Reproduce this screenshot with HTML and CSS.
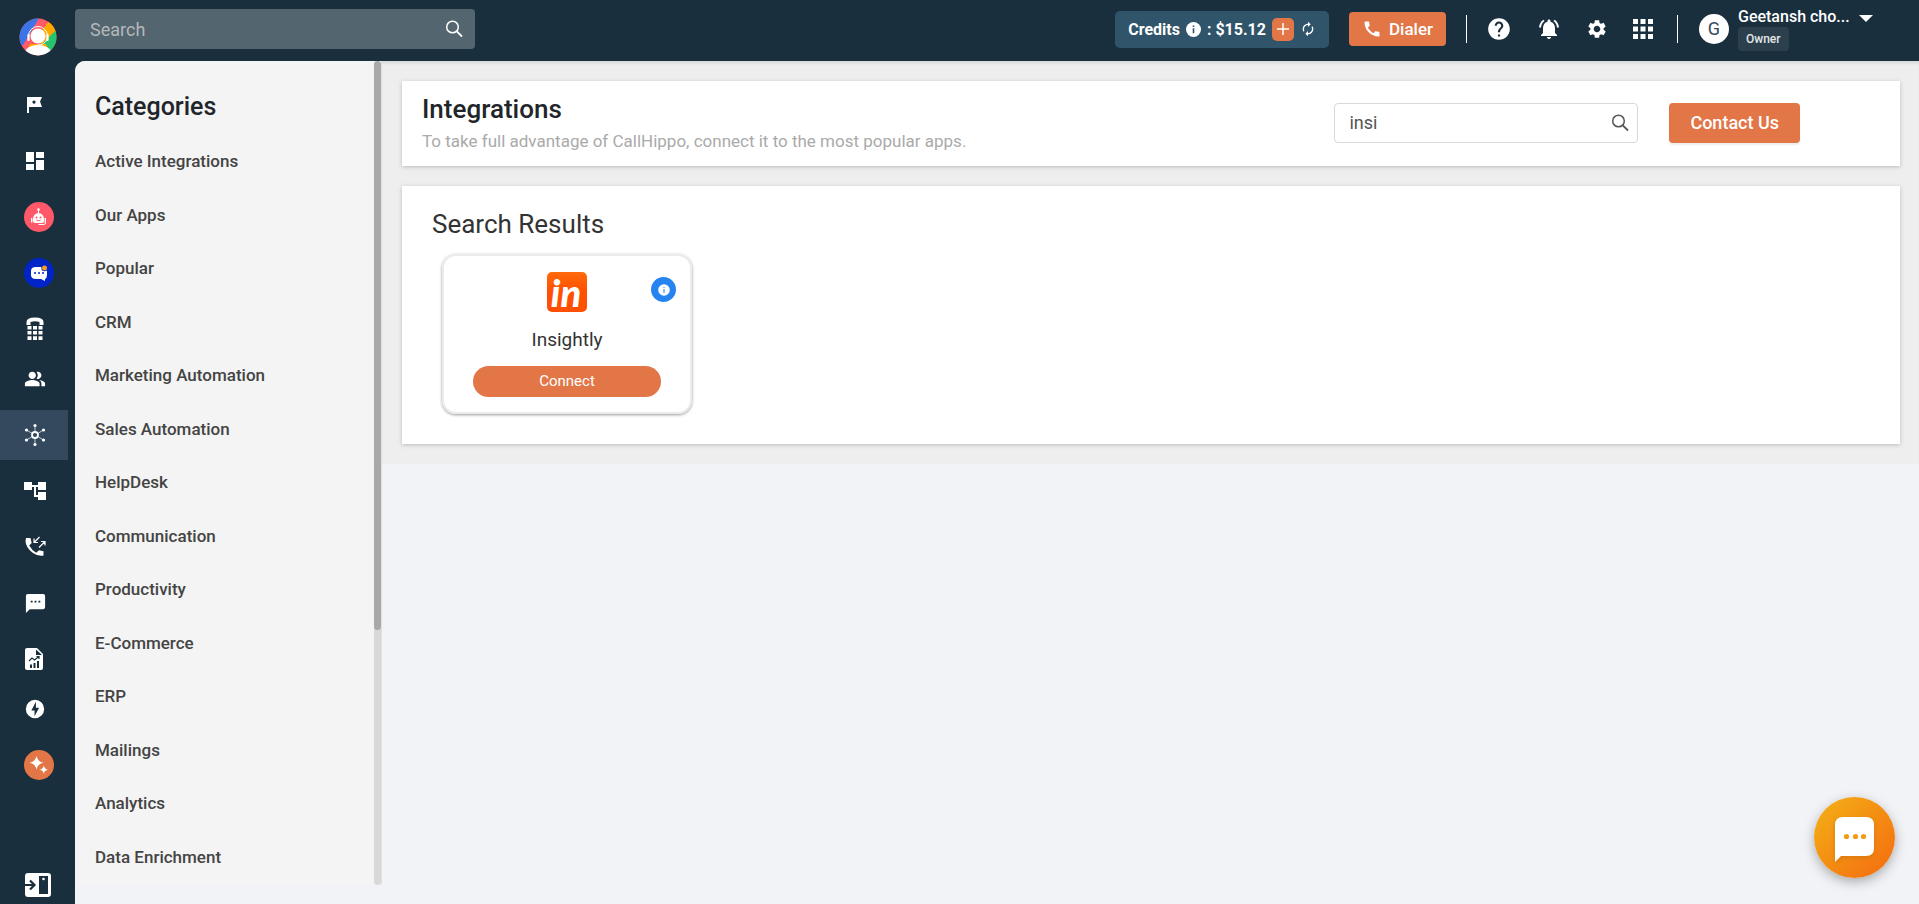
FILE: index.html
```html
<!DOCTYPE html>
<html lang="en">
<head>
    <meta charset="UTF-8">
    <meta name="viewport" content="width=device-width, initial-scale=1.0">
    <title>Integrations</title>
    <link rel="stylesheet" href="styles.css">
</head>
<body>
    <div class="app">
        <aside class="sidebar">
            <a class="logo" href="#" aria-label="Home">
                <svg width="38" height="38" viewBox="0 0 38 38">
                    <defs><clipPath id="logoClip"><circle cx="19" cy="19" r="18.5"/></clipPath></defs>
                    <g clip-path="url(#logoClip)">
                        <rect width="38" height="38" fill="#ff5a69"/>
                        <path d="M0 0h20L4 27H0z" fill="#3b74e8"/>
                        <path d="M30 3l8 8v5L25 28l-8-8z" fill="#ffa800"/>
                        <path d="M38 11v27H26l-3-12z" fill="#28c46d"/>
                        <path d="M11 26h16l2 4H9z" fill="#ffa800"/>
                        <ellipse cx="19" cy="35" rx="13" ry="8" fill="#fff"/>
                        <circle cx="19" cy="18" r="7.500" fill="#fff"/>
                        <path d="M9.500 18a9.500 9.500 0 0 1 19 0" fill="none" stroke="#fff"/>
                        <path d="M9.500 17v5M28.500 17v5" stroke="#fff" stroke-width="2.200" stroke-linecap="round"/>
                        <path d="M28 21a9 8 0 0 1-9 6" fill="none" stroke="#fff"/>
                    </g>
                </svg>
            </a>
            <nav class="menu">
                <ul class="menu-group">
                    <li><a href="#" aria-label="Get started"><svg width="24" height="24" viewBox="0 0 24 24"><path fill="#fff" fill-rule="evenodd" d="M4 4h15l-2 4.500 2 5.500H6v6H4zM11 7.500a1.600 1.600 0 1 0 .01 0z"/></svg></a></li>
                    <li><a href="#" aria-label="Dashboard"><svg width="24" height="24" viewBox="0 0 24 24"><path fill="#fff" d="M3 13h8V3H3v10zm0 8h8v-6H3v6zm10 0h8V11h-8v10zm0-18v6h8V3h-8z"/></svg></a></li>
                    <li><a class="round" href="#" aria-label="AI bot">
                        <svg width="30" height="30" viewBox="0 0 30 30">
                            <circle cx="15" cy="15" r="15" fill="#ff5869"/>
                            <path d="M14 7h1v5h-1z" fill="#fff"/><circle cx="14.500" cy="7.500" r="1.300" fill="#fff"/>
                            <path d="M9 17a5.500 6 0 0 1 11 0v2q0 2-2 2h-7q-2 0-2-2z" fill="#fff"/>
                            <path d="M7 16h1.400v4.500H7zM20.600 16H22v4.500h-1.400z" fill="#fff"/>
                            <path d="M21.500 20v1q0 1.500-2 1.500h-5" stroke="#fff" fill="none"/>
                            <circle cx="12.500" cy="15.500" r="1" fill="#ff5869"/><circle cx="16.500" cy="15.500" r="1" fill="#ff5869"/>
                            <path d="M12.500 18q2 1.600 4 0" stroke="#ff5869" fill="none"/>
                        </svg></a></li>
                    <li><a class="round" href="#" aria-label="Live chat">
                        <svg width="30" height="30" viewBox="0 0 30 30">
                            <circle cx="15" cy="15" r="15" fill="#0024c8"/>
                            <path d="M12 9h6q5 0 5 5v3q0 3-2 4v2l-4-2h-5q-5 0-5-4v-4q0-4 5-4z" fill="#fff"/>
                            <circle cx="11" cy="15" r="1" fill="#0024c8"/><circle cx="15" cy="15" r="1" fill="#0024c8"/><circle cx="19" cy="15" r="1" fill="#0024c8"/>
                            <circle cx="20.500" cy="10" r="3.200" fill="#0024c8"/><circle cx="20.500" cy="10" r="2.500" fill="#f99d1c"/>
                        </svg></a></li>
                    <li><a href="#" aria-label="Numbers"><svg width="24" height="24" viewBox="0 0 24 24"><path fill="#fff" d="M3.500 8V5q0-4.500 8.500-4.500T20.500 5v3h-4V5q-4.500-1.600-9 0v3zM4.500 9h4v3.400h-4zM10 9h4v3.400h-4zM15.500 9h4v3.400h-4zM4.500 14h4v3.600h-4zM10 14h4v3.600h-4zM15.500 14h4v3.600h-4zM4.500 19.200h4V23h-4zM10 19.200h4V23h-4zM15.500 19.200h4V23h-4z"/></svg></a></li>
                </ul>
                <ul class="menu-group">
                    <li><a href="#" aria-label="Users"><svg width="22" height="22" viewBox="0 0 24 24"><path fill="#fff" d="M16.670 13.130C18.040 14.060 19 15.320 19 17v3h4v-3c0-2.180-3.570-3.470-6.330-3.870zM15 12c2.210 0 4-1.790 4-4s-1.790-4-4-4c-.47 0-.91.1-1.330.24C14.500 5.270 15 6.580 15 8s-.5 2.730-1.330 3.760c.42.14.86.24 1.330.24zM9 12c2.210 0 4-1.790 4-4s-1.790-4-4-4-4 1.790-4 4 1.790 4 4 4zm0 1c-2.670 0-8 1.340-8 4v3h16v-3c0-2.660-5.330-4-8-4z"/></svg></a></li>
                    <li><a class="active" href="#" aria-label="Integrations">
                        <svg width="24" height="24" viewBox="0 0 24 24" stroke="#fff" fill="none">
                            <path d="M12 9V3M12 15v6M9.400 10.500L3.500 7M14.600 10.500L20.500 7M9.400 13.500L3.500 17M14.600 13.500l5.900 3.500" stroke-width=".7"/>
                            <circle cx="12" cy="12" r="3" stroke-width="1.800"/>
                            <g fill="#fff" stroke="none"><circle cx="12" cy="2.500" r="1.600"/><circle cx="12" cy="21.500" r="1.600"/><circle cx="3.500" cy="7" r="1.600"/><circle cx="20.500" cy="7" r="1.600"/><circle cx="3.500" cy="17" r="1.600"/><circle cx="20.500" cy="17" r="1.600"/></g>
                        </svg></a></li>
                    <li><a href="#" aria-label="Call flow"><svg width="24" height="24" viewBox="0 0 24 24"><path fill="#fff" d="M23 11V3h-8v3H9V3H1v8h8V8h2v10h4v3h8v-8h-8v3h-2V8h2v3z"/></svg></a></li>
                    <li><a href="#" aria-label="Call logs"><svg width="22" height="22" viewBox="0 0 22 22">
                        <path fill="#fff" d="M2 2h4.500l1.200 5-2.500 2.500q2.500 4.700 7 7.200l2.800-2.500 4.500 1v4.300q-5.500 1-10.500-2.500T2 8q-1-3 0-6z"/>
                        <path d="M15.500 1l-5.500 5.500M10 2.500v4h4M15 11.500l6-6M17 5.500h4v4" stroke="#fff" stroke-width="1.200" fill="none"/></svg></a></li>
                    <li><a href="#" aria-label="Messages"><svg width="23" height="23" viewBox="0 0 24 24"><path fill="#fff" d="M20 2H4c-1.100 0-1.990.9-1.990 2L2 22l4-4h14c1.100 0 2-.9 2-2V4c0-1.100-.9-2-2-2zM9 11H7V9h2v2zm4 0h-2V9h2v2zm4 0h-2V9h2v2z"/></svg></a></li>
                    <li><a href="#" aria-label="Reports"><svg width="24" height="24" viewBox="0 0 24 24">
                        <path fill="#fff" d="M4 1h10l6 6v14q0 2-2 2H4q-2 0-2-2V3q0-2 2-2z"/>
                        <path fill="#1a2f3d" d="M13 2.500V8h6zM7 17.500h2V21H7zM10.500 16h2v5h-2zM14 14h2v7h-2z"/>
                        <path d="M6 14l3-3 2.500 2L16 9.500M13.500 9.500H16V12" stroke="#1a2f3d" stroke-width="1.200" fill="none"/></svg></a></li>
                </ul>
                <ul class="menu-group">
                    <li><a href="#" aria-label="Power dialer"><svg width="22" height="22" viewBox="0 0 24 24"><path fill="#fff" fill-rule="evenodd" d="M12 2a10 10 0 1 0 0 20 10 10 0 0 0 0-20zm-.5 18v-6.500H8L13 4v6.500h3.500z"/></svg></a></li>
                    <li><a class="round" href="#" aria-label="AI studio">
                        <svg width="30" height="30" viewBox="0 0 30 30">
                            <circle cx="15" cy="15" r="15" fill="#e27647"/>
                            <path fill="#fff" d="M12.500 6q1 5.500 7 6.800-6 1.200-7 6.700-1-5.500-7-6.700 6-1.300 7-6.800zM19.800 15.500q.6 3.500 4.200 4.200-3.600.7-4.200 4.100-.6-3.400-4.200-4.100 3.600-.7 4.200-4.200z"/>
                        </svg></a></li>
                </ul>
            </nav>
            <button class="collapse" type="button" aria-label="Expand menu">
                <svg width="26" height="24" viewBox="0 0 26 24">
                    <rect width="26" height="24" rx="3" fill="#fff"/>
                    <path d="M0 12h9M5 7.500L9.500 12 5 16.500" stroke="#1a2f3d" stroke-width="2.200" fill="none"/>
                    <rect x="14" y="3" width="9" height="18" fill="#1a2f3d"/><circle cx="18.500" cy="6" r="1.300" fill="#fff"/>
                </svg>
            </button>
        </aside>

        <div class="page">
            <header class="topbar">
                <div class="global-search">
                    <input type="text" placeholder="Search" aria-label="Search">
                    <button type="button" aria-label="Search"><svg width="20" height="20" viewBox="0 0 20 20"><circle cx="8.500" cy="8" r="5.800" fill="none" stroke="#fff" stroke-width="1.500"/><path d="M12.500 12.200l5.500 5.300" stroke="#fff" stroke-width="1.800"/></svg></button>
                </div>
                <div class="credits">
                    <span>Credits</span>
                    <svg width="15" height="15" viewBox="0 0 15 15"><circle cx="7.500" cy="7.500" r="7.500" fill="#fff"/><path d="M6.700 3.500h1.600v1.600H6.700zM6.700 6.300h1.600v5H6.700z" fill="#305469"/></svg>
                    <span>: $15.12</span>
                    <button class="add" type="button" aria-label="Add credits"><svg width="12" height="12" viewBox="0 0 12 12"><path d="M6 0v12M0 6h12" stroke="#fff" stroke-width="1.500"/></svg></button>
                    <button class="refresh" type="button" aria-label="Refresh"><svg width="16" height="16" viewBox="0 0 24 24"><path fill="#fff" d="M12 6v3l4-4-4-4v3c-4.420 0-8 3.580-8 8 0 1.570.46 3.030 1.240 4.260L6.700 14.800c-.45-.83-.7-1.790-.7-2.800 0-3.310 2.690-6 6-6zm6.760 1.740L17.300 9.200c.44.840.7 1.790.7 2.800 0 3.310-2.690 6-6 6v-3l-4 4 4 4v-3c4.420 0 8-3.580 8-8 0-1.570-.46-3.030-1.240-4.260z"/></svg></button>
                </div>
                <button class="dialer" type="button">
                    <svg width="20" height="20" viewBox="0 0 24 24"><path fill="#fff" d="M20.010 15.380c-1.230 0-2.420-.2-3.530-.56-.35-.12-.74-.03-1.010.24l-1.570 1.970c-2.830-1.350-5.480-3.900-6.890-6.830l1.950-1.660c.27-.28.35-.67.24-1.020-.37-1.110-.56-2.300-.56-3.530 0-.54-.45-.99-.99-.99H4.190C3.650 3 3 3.240 3 3.990 3 13.280 10.730 21 20.010 21c.71 0 .99-.63.99-1.180v-3.450c0-.54-.45-.99-.99-.99z"/></svg>
                    Dialer
                </button>
                <span class="divider"></span>
                <div class="tools">
                    <button type="button" aria-label="Help"><svg width="26" height="26" viewBox="0 0 24 24"><path fill="#fff" d="M12 2C6.480 2 2 6.480 2 12s4.480 10 10 10 10-4.480 10-10S17.520 2 12 2zm1 17h-2v-2h2v2zm2.070-7.750l-.9.920C13.450 12.900 13 13.500 13 15h-2v-.5c0-1.100.45-2.100 1.170-2.830l1.240-1.260c.37-.36.59-.86.59-1.410 0-1.100-.9-2-2-2s-2 .9-2 2H8c0-2.210 1.790-4 4-4s4 1.790 4 4c0 .88-.36 1.680-.93 2.250z"/></svg></button>
                    <button type="button" aria-label="Notifications"><svg width="24" height="24" viewBox="0 0 24 24"><path fill="#fff" d="M7.580 4.080L6.150 2.650C3.750 4.480 2.170 7.300 2.030 10.500h2c.15-2.650 1.510-4.970 3.550-6.420zm12.390 6.420h2c-.15-3.200-1.730-6.020-4.120-7.850l-1.420 1.430c2.020 1.450 3.390 3.770 3.540 6.420zM18 11c0-3.070-1.640-5.640-4.500-6.320V4c0-.83-.67-1.500-1.500-1.500s-1.500.67-1.500 1.500v.68C7.630 5.360 6 7.920 6 11v5l-2 2v1h16v-1l-2-2v-5zm-6 11c.14 0 .27-.01.4-.04.65-.14 1.180-.58 1.440-1.180.1-.24.150-.5.150-.78h-4c.01 1.100.9 2 2.010 2z"/></svg></button>
                    <button type="button" aria-label="Settings"><svg width="22" height="22" viewBox="0 0 24 24"><path fill="#fff" d="M19.140 12.940c.04-.3.06-.61.06-.94 0-.32-.02-.64-.07-.94l2.030-1.580c.18-.14.23-.41.12-.61l-1.920-3.320c-.12-.22-.37-.29-.59-.22l-2.390.96c-.5-.38-1.030-.7-1.620-.94L14.400 2.810c-.04-.24-.24-.41-.48-.41h-3.840c-.24 0-.43.17-.47.41L9.250 5.350C8.660 5.590 8.120 5.920 7.630 6.290L5.240 5.330c-.22-.08-.47 0-.59.22L2.740 8.870c-.12.21-.08.47.12.610l2.030 1.580C4.840 11.360 4.800 11.690 4.800 12s.02.64.07.940l-2.030 1.580c-.18.14-.23.41-.12.610l1.920 3.320c.12.22.37.29.59.22l2.390-.96c.5.38 1.030.7 1.620.94l.36 2.540c.05.24.24.41.48.41h3.840c.24 0 .44-.17.47-.41l.36-2.540c.59-.24 1.130-.56 1.620-.94l2.390.96c.22.08.47 0 .59-.22l1.920-3.320c.12-.22.07-.47-.12-.61l-2.010-1.580zM12 15.600c-1.980 0-3.600-1.620-3.600-3.600s1.620-3.600 3.600-3.600 3.600 1.620 3.600 3.600-1.620 3.600-3.600 3.600z"/></svg></button>
                    <button type="button" aria-label="Apps"><svg width="20" height="20" viewBox="0 0 20 20"><path fill="#fff" d="M0 0h5v5H0zM7.500 0h5v5h-5zM15 0h5v5h-5zM0 7.500h5v5H0zM7.500 7.500h5v5h-5zM15 7.500h5v5h-5zM0 15h5v5H0zM7.500 15h5v5h-5zM15 15h5v5h-5z"/></svg></button>
                </div>
                <span class="divider"></span>
                <button class="profile" type="button">
                    <span class="avatar">G</span>
                    <span class="profile-info">
                        <span class="profile-name">Geetansh cho...</span>
                        <span class="role">Owner</span>
                    </span>
                    <svg class="caret" width="14" height="7" viewBox="0 0 14 7"><path fill="#fff" d="M0 0h14L7 7z"/></svg>
                </button>
            </header>

            <div class="content">
                <aside class="categories">
                    <div class="category-list">
                        <h2>Categories</h2>
                        <ul>
                            <li><a href="#">Active Integrations</a></li>
                            <li><a href="#">Our Apps</a></li>
                            <li><a href="#">Popular</a></li>
                            <li><a href="#">CRM</a></li>
                            <li><a href="#">Marketing Automation</a></li>
                            <li><a href="#">Sales Automation</a></li>
                            <li><a href="#">HelpDesk</a></li>
                            <li><a href="#">Communication</a></li>
                            <li><a href="#">Productivity</a></li>
                            <li><a href="#">E-Commerce</a></li>
                            <li><a href="#">ERP</a></li>
                            <li><a href="#">Mailings</a></li>
                            <li><a href="#">Analytics</a></li>
                            <li><a href="#">Data Enrichment</a></li>
                        </ul>
                    </div>
                    <div class="scroll-track"><div class="scroll-thumb"></div></div>
                </aside>

                <main class="main">
                    <section class="panel intro">
                        <div class="intro-text">
                            <h1>Integrations</h1>
                            <p>To take full advantage of CallHippo, connect it to the most popular apps.</p>
                        </div>
                        <div class="app-search">
                            <input type="text" value="insi" aria-label="Search integrations">
                            <button type="button" aria-label="Search"><svg width="20" height="20" viewBox="0 0 20 20"><circle cx="8.500" cy="8" r="5.800" fill="none" stroke="#555" stroke-width="1.500"/><path d="M12.500 12.200l5.500 5.300" stroke="#555" stroke-width="1.800"/></svg></button>
                        </div>
                        <button class="contact" type="button">Contact Us</button>
                    </section>

                    <section class="panel results">
                        <h2>Search Results</h2>
                        <div class="cards">
                            <article class="card">
                                <svg class="insightly" width="40" height="40" viewBox="0 0 40 40">
                                    <defs><linearGradient id="insightly" x1="0" y1="0" x2="0" y2="1"><stop offset="0" stop-color="#ff6a0c"/><stop offset=".5" stop-color="#ff4f00"/></linearGradient></defs>
                                    <rect width="40" height="40" rx="5" fill="url(#insightly)"/>
                                    <text class="insightly-mark" x="19" y="35" text-anchor="middle">in</text>
                                </svg>
                                <button class="info" type="button" aria-label="About Insightly"><svg width="12" height="12" viewBox="0 0 12 12"><circle cx="6" cy="6" r="5.800" fill="#fff"/><path d="M5.500 3h1v1h-1zM5.500 5h1v4h-1z" fill="#2684f0"/></svg></button>
                                <h3>Insightly</h3>
                                <button class="connect" type="button">Connect</button>
                            </article>
                        </div>
                    </section>
                </main>
            </div>
        </div>
    </div>

    <button class="chat" type="button" aria-label="Open chat">
        <svg width="40" height="46" viewBox="0 0 40 46">
            <path d="M8 0h23q8 0 8 8v23q0 8-8 8H6l-6 6V8q0-8 8-8z" fill="#fff"/>
            <g fill="#f59a13"><circle cx="11.500" cy="19.500" r="2.600"/><circle cx="20.500" cy="19.500" r="2.600"/><circle cx="28.500" cy="19.500" r="2.600"/></g>
        </svg>
    </button>
</body>
</html>
```
FILE: styles.css
```css
* {
    box-sizing: border-box;
}
body {
    margin: 0;
    background-color: #f1f3f7;
    color: #212529;
    font-family: Roboto, "Liberation Sans", sans-serif;
    font-size: 16px;
}
h1, h2, h3, p, ul {
    margin: 0;
    padding: 0;
}
ul {
    list-style: none;
}
a {
    color: inherit;
    text-decoration: none;
}
button {
    padding: 0;
    border: 0;
    background: none;
    color: inherit;
    font: inherit;
    cursor: pointer;
}
input {
    border: 0;
    outline: 0;
    background: none;
    font: inherit;
}
svg {
    display: block;
    flex: none;
}
.app {
    display: flex;
    height: 100vh;
    background-color: #1a2f3d;
}

/* left menu */
.sidebar {
    display: flex;
    flex-direction: column;
    flex: none;
    width: 75px;
    padding: 18px 0 7px;
}
.logo {
    align-self: center;
    margin-bottom: 24px;
}
.menu {
    flex: 1;
}
.menu-group {
    display: grid;
    gap: 6px;
}
.menu-group a {
    display: flex;
    align-items: center;
    justify-content: center;
    width: 68px;
    height: 50px;
    padding-left: 2px;
}
.menu-group .round {
    width: 76px;
}
.menu-group .active {
    background-color: #34495e;
}
.collapse {
    align-self: center;
}

/* header */
.page {
    display: flex;
    flex-direction: column;
    flex: 1;
    min-width: 0;
}
.topbar {
    display: flex;
    align-items: center;
    flex: none;
    height: 61px;
    padding: 0 46px 3px 0;
    color: #fff;
}
.global-search {
    display: flex;
    align-items: center;
    width: 400px;
    height: 40px;
    margin-right: auto;
    padding: 0 11px 0 15px;
    border-radius: 4px;
    background-color: #53656f;
}
.global-search input {
    flex: 1;
    min-width: 0;
    padding: 0;
    color: #fff;
    font-size: 18px;
}
.global-search input::placeholder {
    color: #b4b8bb;
}
.credits {
    display: flex;
    align-items: center;
    gap: 6px;
    height: 37px;
    margin-right: 20px;
    padding: 0 13px;
    border-radius: 5px;
    background-color: #305469;
    font-weight: 700;
}
.add {
    display: flex;
    align-items: center;
    justify-content: center;
    width: 22px;
    height: 23px;
    border-radius: 5px;
    background-color: #e27647;
}
.dialer {
    display: flex;
    align-items: center;
    gap: 7px;
    height: 34px;
    padding: 0 13px;
    border-radius: 4px;
    background-color: #e27647;
    font-size: 17px;
    font-weight: 500;
}
.divider {
    width: 1px;
    height: 28px;
    margin-left: 20px;
    background-color: #fff;
}
.tools {
    display: flex;
    align-items: center;
    gap: 25px;
    margin-left: 19px;
    margin-right: 4px;
}
.profile {
    display: flex;
    align-items: center;
    margin-left: 21px;
}
.avatar {
    width: 30px;
    height: 30px;
    border-radius: 50%;
    background-color: #fff;
    color: #34495e;
    font-size: 18px;
    line-height: 30px;
}
.profile-info {
    display: flex;
    flex-direction: column;
    align-items: flex-start;
    width: 109px;
    margin: 0 12px 0 9px;
}
.profile-name {
    font-weight: 500;
    line-height: 20px;
    white-space: nowrap;
}
.role {
    padding: 0 8px;
    border-radius: 4px;
    background-color: #2b404c;
    color: #e4e7e9;
    font-size: 12px;
    font-weight: 500;
    line-height: 24px;
}
.caret {
    align-self: flex-start;
    margin-top: 8px;
}

/* categories */
.content {
    display: flex;
    align-items: flex-start;
    flex: 1;
    min-height: 0;
    border-radius: 10px 0 0 0;
    background-color: #f1f3f7;
    overflow: hidden;
}
.categories {
    display: flex;
    flex: none;
    width: 307px;
    height: calc(100vh - 80px);
    border-right: 1px solid #e0e0e0;
    background-color: #f4f4f4;
}
.category-list {
    flex: 1;
    padding: 28px 0 0 20px;
    overflow: hidden;
}
.scroll-track {
    width: 7px;
    border-radius: 4px;
    background-color: #d8d8d8;
}
.scroll-thumb {
    height: 69%;
    border-radius: 4px;
    background-color: #a9a9a9;
}
.categories h2 {
    margin-bottom: 10px;
    font-size: 25px;
    font-weight: 500;
    line-height: 36px;
}
.categories a {
    display: block;
    padding: 14px 0;
    color: #444;
    font-size: 17px;
    font-weight: 500;
    line-height: 1.5;
}

/* integrations */
.main {
    display: grid;
    gap: 20px;
    flex: 1;
    min-width: 0;
    padding: 20px 19px 20px 20px;
    background-color: #eee;
    box-shadow: inset 0 4px 4px -3px #ccc;
}
.panel {
    background-color: #fff;
    box-shadow: 0 1px 4px #bbb;
}
.intro {
    display: flex;
    align-items: center;
    height: 85px;
    padding: 0 100px 2px 20px;
}
.intro-text {
    flex: 1;
}
.intro h1 {
    font-size: 26px;
    font-weight: 500;
    line-height: 36px;
}
.intro p {
    color: #aaa;
    font-size: 17px;
    line-height: 28px;
}
.app-search {
    display: flex;
    align-items: center;
    width: 304px;
    height: 40px;
    padding: 0 7px 0 14px;
    border: 1px solid #d9d9d9;
    border-radius: 4px;
}
.app-search input {
    flex: 1;
    min-width: 0;
    padding: 0;
    color: #555;
    font-size: 18px;
}
.contact {
    height: 40px;
    margin-left: 31px;
    padding: 0 21px;
    border-radius: 4px;
    background-color: #e27647;
    box-shadow: 0 2px 2px #eee;
    color: #fff;
    font-size: 18px;
    font-weight: 500;
}
.results {
    padding: 20px 30px 30px;
}
.results h2 {
    color: #333;
    font-size: 26px;
    font-weight: 400;
    line-height: 36px;
}
.cards {
    display: flex;
    padding: 12px 10px 0;
}
.card {
    position: relative;
    display: flex;
    flex-direction: column;
    align-items: center;
    width: 250px;
    height: 160px;
    padding-top: 16px;
    border: 2px solid #ebebeb;
    border-radius: 14px;
    box-shadow: 0 1px 3px #999;
}
.insightly {
    overflow: visible;
}
.insightly-mark {
    fill: #fff;
    font-family: Lato, sans-serif;
    font-size: 38px;
    font-style: italic;
    font-weight: 900;
}
.info {
    position: absolute;
    top: 21px;
    right: 14px;
    display: flex;
    align-items: center;
    justify-content: center;
    width: 25px;
    height: 25px;
    border-radius: 50%;
    background-color: #2684f0;
}
.card h3 {
    margin: 14px 0 12px;
    color: #333;
    font-size: 19px;
    font-weight: 400;
    line-height: 28px;
}
.connect {
    width: 188px;
    height: 31px;
    padding-bottom: 1px;
    border-radius: 16px;
    background-color: #e27647;
    color: #fff;
    font-size: 15px;
}

/* chat launcher */
.chat {
    position: fixed;
    right: 24px;
    bottom: 26px;
    display: flex;
    align-items: center;
    justify-content: center;
    width: 81px;
    height: 81px;
    padding-top: 4px;
    border-radius: 50%;
    background: linear-gradient(135deg, #f3b216, #f56a10);
    box-shadow: 0 4px 12px #aaa;
}
.chat svg {
    filter: drop-shadow(0 2px 2px #d97a0e);
}
```
